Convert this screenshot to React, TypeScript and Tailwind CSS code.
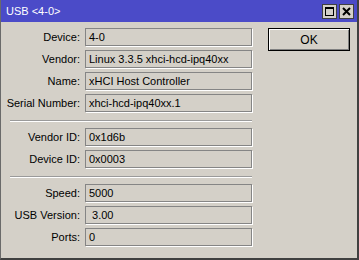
const rows1 = [
  { label: "Device:", value: "4-0" },
  { label: "Vendor:", value: "Linux 3.3.5 xhci-hcd-ipq40xx" },
  { label: "Name:", value: "xHCI Host Controller" },
  { label: "Serial Number:", value: "xhci-hcd-ipq40xx.1" },
];

const rows2 = [
  { label: "Vendor ID:", value: "0x1d6b" },
  { label: "Device ID:", value: "0x0003" },
];

const rows3 = [
  { label: "Speed:", value: "5000" },
  { label: "USB Version:", value: " 3.00" },
  { label: "Ports:", value: "0" },
];

const Row = (props: { label: string; value: string }) => {
  return (
    <div className="flex items-center h-[18px]">
      <div className="w-[80px] text-right pr-[1px] leading-none">{props.label}</div>
      <div className="ml-[4px] w-[167px] h-[18px] border border-[#858585] shadow-[1px_1px_0_#ffffff] flex items-center pl-[3px] whitespace-pre leading-none">
        {props.value}
      </div>
    </div>
  );
};

const Group = (props: { rows: { label: string; value: string }[] }) => {
  return (
    <div className="flex flex-col gap-[4px]">
      {props.rows.map((r) => (
        <Row key={r.label} label={r.label} value={r.value} />
      ))}
    </div>
  );
};

const Separator = () => (
  <div className="ml-[9px] w-[242px] h-[2px] border-t border-[#9a9a9a] border-b border-b-white mt-[8px] mb-[6px]" />
);

export default function App() {
  return (
    <div
      className="w-[359px] h-[260px] bg-[#d4d0c8] border-l border-l-[#6a6a6a] border-r-2 border-r-[#404040] border-b-2 border-b-[#404040] flex flex-col text-[11px] text-black"
      style={{ fontFamily: '"Liberation Sans", Arial, sans-serif' }}
    >
      <div className="h-[22px] bg-[#4b4bc8] flex items-center justify-between pl-[5px] pr-[3px] shrink-0">
        <span className="text-white text-[11px]">USB &lt;4-0&gt;</span>
        <div className="flex gap-[2px]">
          <div className="w-[15px] h-[15px] bg-[#d4d0c8] border border-[#404040] flex items-center justify-center">
            <div className="w-[9px] h-[9px] border border-black border-t-2" />
          </div>
          <div className="w-[15px] h-[15px] bg-[#d4d0c8] border border-[#404040] flex items-center justify-center">
            <svg width="9" height="9" viewBox="0 0 9 9">
              <path d="M1 1 L8 8 M8 1 L1 8" stroke="#000" strokeWidth="2" />
            </svg>
          </div>
        </div>
      </div>

      <div className="flex pt-[6px]">
        <div className="flex flex-col">
          <Group rows={rows1} />
          <Separator />
          <Group rows={rows2} />
          <Separator />
          <Group rows={rows3} />
        </div>
        <div className="ml-[16px]">
          <button className="w-[82px] h-[23px] border border-black bg-[#d4d0c8] shadow-[inset_1px_1px_0_#ffffff,inset_-1px_-1px_0_#808080] text-[12px] flex items-center justify-center">
            OK
          </button>
        </div>
      </div>
    </div>
  );
}
